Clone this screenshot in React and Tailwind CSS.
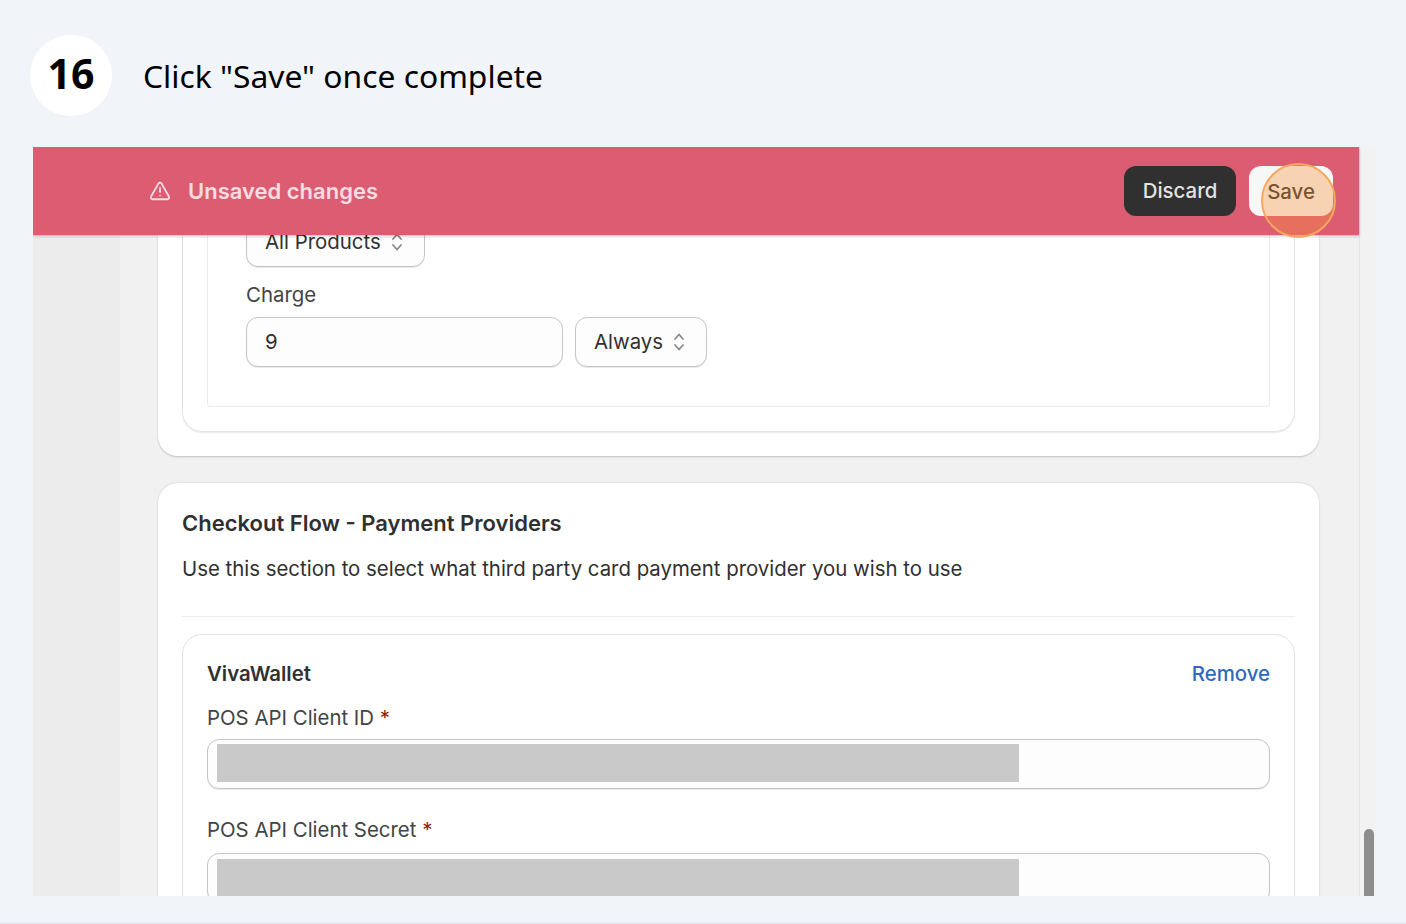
import { TriangleAlert } from 'lucide-react';

const UpDown = () => (
  <svg width="14" height="22" viewBox="0 0 14 22" fill="none" stroke="#8a8a8a" strokeWidth="1.8" strokeLinecap="round" strokeLinejoin="round">
    <path d="M3 8l4-4.5L11 8" />
    <path d="M3 14l4 4.5L11 14" />
  </svg>
);

const fieldBorder = 'border border-[#c4c4c4] shadow-[0_1px_0_rgba(0,0,0,0.08)] bg-[#fdfdfd]';

const Select = ({ label, className = '' }) => (
  <div className={`flex items-center gap-[9px] h-[50px] pl-[18px] rounded-[12px] text-[#303030] leading-[14px] whitespace-nowrap ${fieldBorder} ${className}`}>
    {label} <UpDown />
  </div>
);

const Redacted = ({ className = '' }) => (
  <div className={`w-[802px] bg-[#c9c9c9] ${className}`} />
);

const Required = ({ children }) => (
  <div className="text-[#444] leading-[28px]">
    {children} <span className="text-[#8e1f0b]">*</span>
  </div>
);

export default function App() {
  return (
    <div className="w-[1406px] h-[924px] bg-[#f1f5fa] border-b-2 border-[#e6eaf0] overflow-hidden font-['Inter',sans-serif] relative">
      {/* step header */}
      <div className="h-[147px] flex items-start pt-[35px] pl-[30px]">
        <div className="w-[82px] h-[81px] pb-[3px] rounded-full bg-white flex items-center justify-center font-['Noto_Sans',sans-serif] font-bold text-[41px] text-black">
          16
        </div>
        <div className="ml-[31px] mt-[19px] font-['Noto_Sans',sans-serif] text-[31.8px] leading-[44px] text-black">
          Click "Save" once complete
        </div>
      </div>

      {/* screenshot */}
      <div className="ml-[33px] w-[1343px] h-[749px] flex overflow-hidden text-[20.4px]">
        <div className="w-[1326px] flex flex-col">
          <div className="relative z-10 h-[88px] shrink-0 bg-[#dc5d71] shadow-[0_1px_3px_rgba(0,0,0,0.25)] flex items-center pl-[116px] pr-[26px]">
            <TriangleAlert className="w-[22px] h-[22px] text-[#f6dde1]" strokeWidth={2} />
            <span className="ml-[17px] text-[22px] font-semibold text-[#f6dde1]">Unsaved changes</span>
            <div className="ml-auto w-[112px] h-[50px] pt-[1px] rounded-[12px] bg-[#303030] text-[#e3e3e3] font-medium flex items-center justify-center">
              Discard
            </div>
            <div className="ml-[13px] w-[84px] h-[50px] pt-[3px] rounded-[12px] bg-[#f7f7f7] text-[#303030] font-medium flex items-center justify-center">
              Save
            </div>
            <div className="absolute left-[1228px] top-[16px] w-[75px] h-[75px] rounded-full border-2 border-[#f5a75f] bg-[#fa933a]/36" />
          </div>

          <div className="flex-1 flex min-h-0 overflow-hidden">
            <div className="w-[87px] shrink-0 bg-[#ececec]" />
            <div className="flex-1 bg-[#f1f1f1] pl-[38px] pr-[40px]">
              {/* card cut off by the bar */}
              <div className="h-[221px] bg-white rounded-b-[20px] px-[24px] pb-[24px] shadow-[0_1px_2px_rgba(0,0,0,0.2)]">
                <div className="h-full border border-t-0 border-[#e3e3e3] rounded-b-[20px] px-[24px] pb-[24px] shadow-[0_1px_1px_rgba(0,0,0,0.08)]">
                  <div className="h-full flow-root border border-t-0 border-[#ebebeb] rounded-b-[4px] pl-[38px]">
                    <Select label="All Products" className="w-[179px] -mt-[18px]" />
                    <div className="mt-[14px] text-[#444] leading-[28px]">Charge</div>
                    <div className="mt-[8px] flex gap-[12px]">
                      <div className={`w-[317px] h-[50px] pl-[18px] flex items-center rounded-[12px] text-[#303030] ${fieldBorder}`}>
                        9
                      </div>
                      <Select label="Always" className="w-[132px]" />
                    </div>
                  </div>
                </div>
              </div>

              {/* payment providers */}
              <div className="mt-[27px] h-[500px] bg-white rounded-t-[20px] px-[24px] pt-[26px] shadow-[0_0_2px_rgba(0,0,0,0.2)]">
                <div className="text-[22px] font-semibold text-[#303030] leading-[28px]">Checkout Flow - Payment Providers</div>
                <div className="mt-[18px] text-[#303030] leading-[28px]">
                  Use this section to select what third party card payment provider you wish to use
                </div>
                <div className="mt-[33px] border-t border-[#ebebeb]" />
                <div className="mt-[17px] h-[400px] border border-[#e3e3e3] rounded-t-[20px] px-[24px] pt-[25px]">
                  <div className="flex justify-between leading-[28px]">
                    <span className="font-semibold text-[#303030]">VivaWallet</span>
                    <span className="text-[#2f68c0] font-medium">Remove</span>
                  </div>
                  <div className="mt-[16px]"><Required>POS API Client ID</Required></div>
                  <div className={`mt-[7px] h-[50px] rounded-[12px] pl-[9px] pt-[4px] ${fieldBorder}`}>
                    <Redacted className="h-[38px]" />
                  </div>
                  <div className="mt-[27px]"><Required>POS API Client Secret</Required></div>
                  <div className={`mt-[9px] h-[50px] rounded-[12px] pl-[9px] pt-[5px] ${fieldBorder}`}>
                    <Redacted className="h-[40px]" />
                  </div>
                </div>
              </div>
            </div>
          </div>
        </div>

        {/* scrollbar */}
        <div className="w-[17px] shrink-0 bg-[#f2f2f2] border-l border-[#e4e4e4] relative">
          <div className="absolute left-[4px] top-[682px] w-[10px] h-[80px] rounded-full bg-[#8d8d8d]" />
        </div>
      </div>
    </div>
  );
}
